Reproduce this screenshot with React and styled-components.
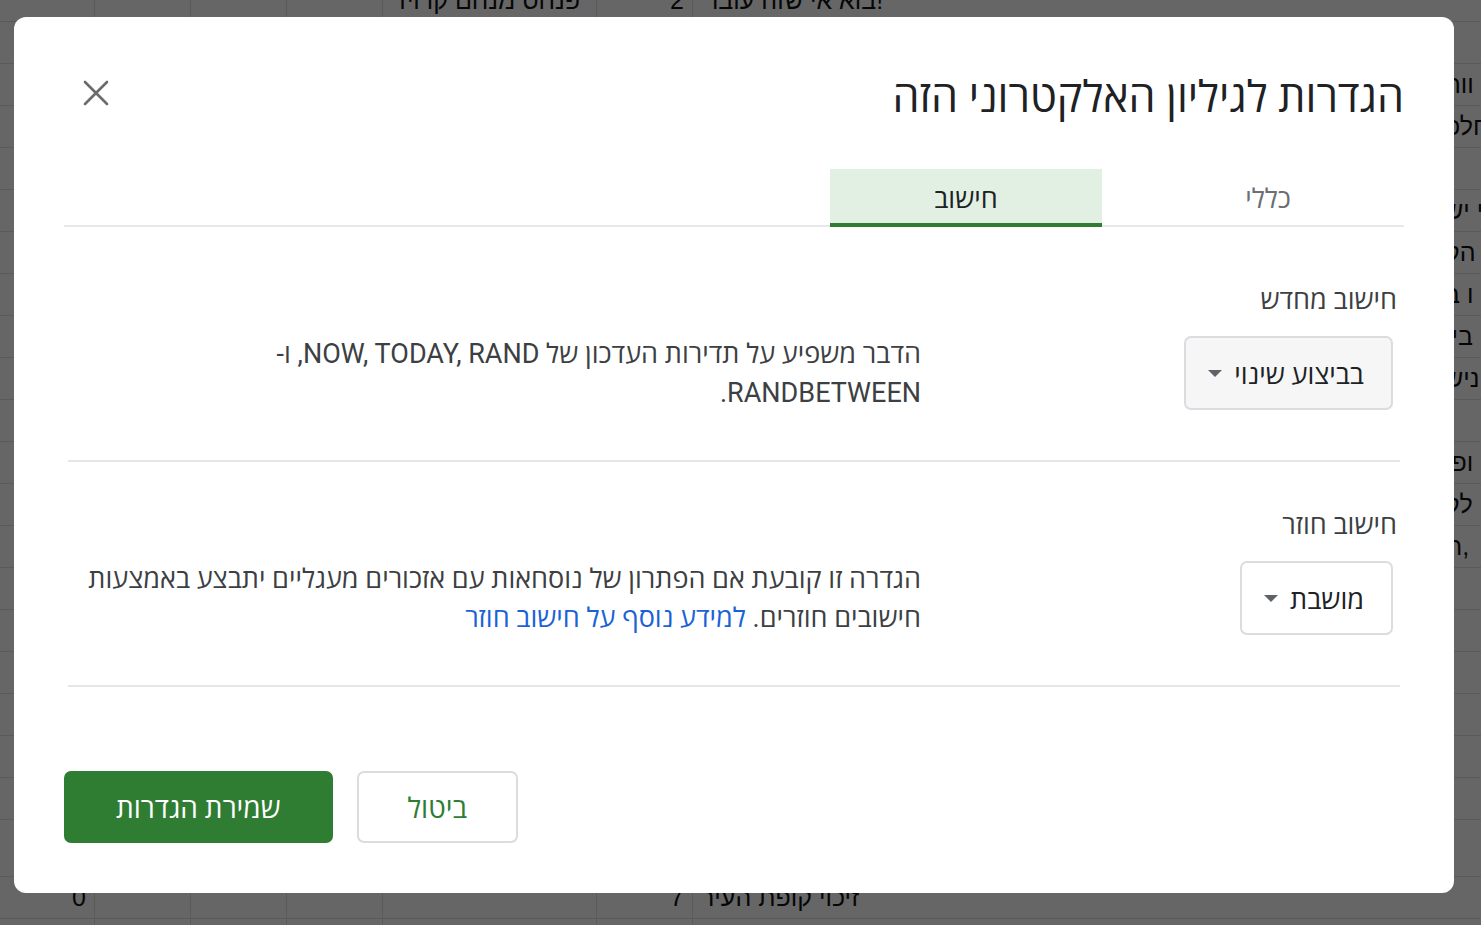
import React from "react";
import styled, { createGlobalStyle } from "styled-components";

const GlobalStyle = createGlobalStyle`
  html, body { margin: 0; padding: 0; height: 100%; overflow: hidden; background: #fff; }
  body { font-family: Roboto, "Open Sans", "Liberation Sans", sans-serif; }
  * { box-sizing: border-box; }
`;

/* ---------- background spreadsheet ---------- */
const Sheet = styled.div`
  width: 1481px;
  height: 945px;
  overflow: hidden;
  display: flex;
  flex-direction: column;
  margin-top: -20px;
  font-family: "Liberation Sans", Arial, sans-serif;
  font-size: 25px;
  color: #111;
`;

const SheetRow = styled.div`
  display: flex;
  flex: none;
  height: ${(p) => p.$h || 42}px;
  border-bottom: 1px solid #e2e2e2;
`;

const Cell = styled.div`
  flex: none;
  width: ${(p) => p.$w}px;
  height: 100%;
  border-right: ${(p) => (p.$noLine ? "none" : "1px solid #e2e2e2")};
  display: flex;
  align-items: center;
  justify-content: ${(p) => (p.$align === "right" ? "flex-end" : "flex-start")};
  padding: 0 ${(p) => p.$pad ?? 8}px;
  white-space: nowrap;
  overflow: visible;
  direction: ltr;
`;

const Visual = styled.span`
  unicode-bidi: bidi-override;
  direction: ltr;
`;

const Overlay = styled.div`
  position: fixed;
  inset: 0;
  background: rgba(0, 0, 0, 0.6);
`;

/* ---------- dialog ---------- */
const Dialog = styled.div`
  position: fixed;
  left: 14px;
  top: 17px;
  width: 1440px;
  height: 876px;
  background: #fff;
  border-radius: 12px;
  direction: rtl;
  padding: 56px 50px 50px;
  display: flex;
  flex-direction: column;
  font-family: Roboto, "Open Sans", "Liberation Sans", sans-serif;
`;

const Header = styled.div`
  display: flex;
  align-items: center;
  justify-content: space-between;
  height: 44px;
`;

const Title = styled.h1`
  margin: 0;
  font-size: 43px;
  font-weight: 400;
  color: #202124;
  line-height: 44px;
  margin-top: 4px;
`;

const CloseButton = styled.button`
  width: 44px;
  height: 44px;
  margin-left: 10px;
  border: none;
  background: transparent;
  padding: 0;
  display: flex;
  align-items: center;
  justify-content: center;
  cursor: pointer;
  margin-top: -4px;
`;

const TabList = styled.div`
  display: flex;
  gap: 30px;
  margin-top: 52px;
  border-bottom: 2px solid #e8e8ec;
`;

const Tab = styled.div`
  width: 272px;
  height: 58px;
  margin-bottom: -2px;
  display: flex;
  align-items: center;
  justify-content: center;
  font-size: 27px;
  color: ${(p) => (p.$active ? "#202124" : "#6b6e72")};
  background: ${(p) => (p.$active ? "#e1f0e2" : "transparent")};
  border-bottom: 4px solid ${(p) => (p.$active ? "#2e7d32" : "transparent")};
  padding-top: 2px;
`;

const Panel = styled.div`
  padding-top: 10px;
  display: flex;
  flex-direction: column;
`;

const Section = styled.div`
  margin: 0 4px;
  padding: 48px 3px 47px;
  border-bottom: 2px solid #e6e6e8;
`;

const Label = styled.div`
  font-size: 27px;
  line-height: 30px;
  color: #3c4043;
`;

const Row = styled.div`
  display: grid;
  grid-template-columns: 476px 1fr;
  align-items: center;
  margin-top: 18px;
`;

const Select = styled.div`
  justify-self: start;
  margin-right: 4px;
  height: 74px;
  display: flex;
  align-items: center;
  gap: 12px;
  padding: 0 27px 0 22px;
  border: 2px solid #dadce0;
  border-radius: 7px;
  background: ${(p) => (p.$muted ? "#f5f6f5" : "#fff")};
  font-size: 27px;
  color: #202124;
`;

const Caret = styled.span`
  width: 0;
  height: 0;
  border-left: 7px solid transparent;
  border-right: 7px solid transparent;
  border-top: 7px solid #5f6368;
`;

const Description = styled.p`
  margin: 2px 0 0;
  font-size: 27px;
  line-height: 39px;
  color: #3c4043;
  padding-left: 6px;
`;

const Link = styled.a`
  color: #1a62d6;
  text-decoration: none;
`;

const Footer = styled.div`
  margin-top: auto;
  display: flex;
  justify-content: flex-end;
  gap: 24px;
`;

const Button = styled.button`
  height: 72px;
  border-radius: 7px;
  font-family: inherit;
  font-size: 28px;
  padding: 0 ${(p) => (p.$primary ? 50 : 49)}px;
  border: 2px solid ${(p) => (p.$primary ? "#2e7d32" : "#dadce0")};
  background: ${(p) => (p.$primary ? "#2e7d32" : "#fff")};
  color: ${(p) => (p.$primary ? "#fff" : "#2e7d32")};
  cursor: pointer;
`;

const cols = [95, 96, 96, 96, 214, 96, 752, 300];

const rightTexts = {
  2: "הוו",
  3: "פלח",
  5: "שי י",
  6: "קה",
  7: "ב ו",
  8: "ייב",
  9: "שינ",
  11: "יפו",
  12: "קל",
  13: "ת, ",
};

function SheetBackground() {
  const rows = [];
  for (let i = 0; i < 24; i++) {
    const h = i === 20 ? 57 : 42;
    const cells = cols.map((w, c) => {
      let content = null;
      let align = "left";
      let pad = 8;
      if (i === 0) {
        if (c === 4) { content = "פנחס מנחם קרויז"; align = "right"; pad = 16; }
        if (c === 5) { content = "2"; align = "right"; }
        if (c === 6) { content = "בוא אי שזה עובר!"; pad = 12; }
      }
      if (i === 21) {
        if (c === 0) { content = "0"; align = "right"; }
        if (c === 5) { content = "7"; align = "right"; }
        if (c === 6) { content = "זיכוי קופת העיר"; pad = 8; }
      }
      if (c === 7 && rightTexts[i]) {
        content = <Visual>{rightTexts[i]}</Visual>;
        pad = 0;
      }
      return (
        <Cell key={c} $w={w} $align={align} $pad={pad} $noLine={c >= 6}>
          {content}
        </Cell>
      );
    });
    rows.push(
      <SheetRow key={i} $h={h}>
        {cells}
      </SheetRow>
    );
  }
  return <Sheet>{rows}</Sheet>;
}

export default function App() {
  return (
    <>
      <GlobalStyle />
      <SheetBackground />
      <Overlay />
      <Dialog role="dialog" aria-label="הגדרות לגיליון האלקטרוני הזה">
        <Header>
          <Title>הגדרות לגיליון האלקטרוני הזה</Title>
          <CloseButton aria-label="סגירה">
            <svg width="26" height="26" viewBox="0 0 26 26">
              <path d="M2 2 L24 24 M24 2 L2 24" stroke="#6b6b6b" strokeWidth="2.6" strokeLinecap="round" fill="none" />
            </svg>
          </CloseButton>
        </Header>
        <TabList>
          <Tab>כללי</Tab>
          <Tab $active>חישוב</Tab>
        </TabList>
        <Panel>
          <Section>
            <Label>חישוב מחדש</Label>
            <Row>
              <Select $muted>
                <span>בביצוע שינוי</span>
                <Caret />
              </Select>
              <Description>
                הדבר משפיע על תדירות העדכון של NOW, TODAY, RAND, ו-RANDBETWEEN.
              </Description>
            </Row>
          </Section>
          <Section>
            <Label>חישוב חוזר</Label>
            <Row>
              <Select>
                <span>מושבת</span>
                <Caret />
              </Select>
              <Description>
                הגדרה זו קובעת אם הפתרון של נוסחאות עם אזכורים מעגליים יתבצע באמצעות חישובים חוזרים.{" "}
                <Link href="#">למידע נוסף על חישוב חוזר</Link>
              </Description>
            </Row>
          </Section>
        </Panel>
        <Footer>
          <Button>ביטול</Button>
          <Button $primary>שמירת הגדרות</Button>
        </Footer>
      </Dialog>
    </>
  );
}
